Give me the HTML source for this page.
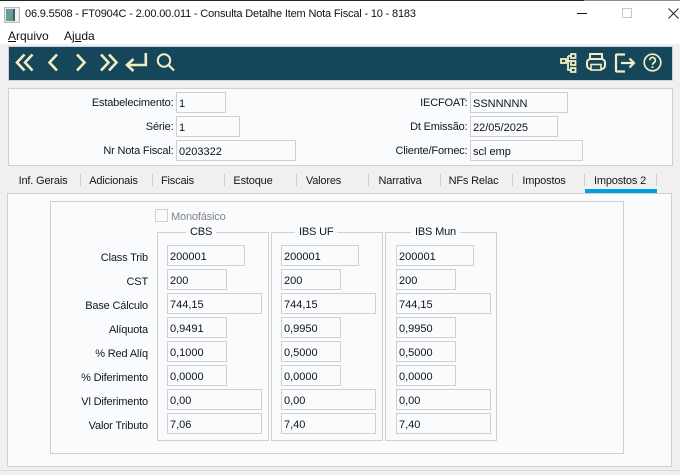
<!DOCTYPE html>
<html><head><meta charset="utf-8">
<style>
html,body{margin:0;padding:0;width:680px;height:475px;overflow:hidden;background:#f0f0f0}
*{box-sizing:border-box}
body{position:relative;font-family:"Liberation Sans",sans-serif;font-size:11px;letter-spacing:-.17px;color:#101820}
.a{position:absolute}
.t{position:absolute;white-space:nowrap;line-height:16px}
.r{position:absolute;white-space:nowrap;line-height:16px;text-align:right;margin-top:1px}
.b{position:absolute;border:1px solid #d0d0d0;background:#fafbfd}
.i{position:absolute;border:1px solid #d0d0d0;background:#fafbfd;height:21px;line-height:22px;padding-left:2px;white-space:nowrap;overflow:hidden;color:#0c1420;letter-spacing:0}
.s{position:absolute;width:1px;height:12px;top:174px;background:#d0d0d0}
.c{position:absolute;white-space:nowrap;line-height:16px;top:173px;text-align:center;width:72px}
.l{position:absolute;background:#fafbfd;padding:0 4px;line-height:16px;top:224px}
</style></head><body>
<div class="a" style="left:0;top:0;width:680px;height:44px;background:#fff"></div>
<div class="a" style="left:0;top:0;width:584px;height:1px;background:#1a2a33"></div>
<div class="a" style="left:584px;top:0;width:96px;height:1px;background:#8a8a8a"></div>
<svg class="a" style="left:4px;top:7px" width="17" height="17"><rect x=".5" y=".5" width="15" height="15" fill="#e8e8e8" stroke="#bbb"/><rect x="2" y="2" width="7" height="12" fill="#6d9aa8"/><rect x="5" y="7" width="4" height="7" fill="#5fa06e"/><rect x="9" y="2" width="2" height="12" fill="#3c5c70"/><rect x="11" y="2" width="3" height="12" fill="#f4f4f4"/></svg>
<div class="t" style="left:25px;top:6px;color:#111">06.9.5508 - FT0904C - 2.00.00.011 - Consulta Detalhe Item Nota Fiscal - 10 - 8183</div>
<div class="a" style="left:577px;top:13px;width:10px;height:1px;background:#111"></div>
<div class="a" style="left:622px;top:8px;width:10px;height:10px;border:1px solid #c8c8c8"></div>
<svg class="a" style="left:667px;top:7px" width="13" height="13"><path d="M1.5 1.5L11.5 11.5M11.5 1.5L1.5 11.5" stroke="#222" stroke-width="1" fill="none"/></svg>
<div class="t" style="left:8px;top:28px;color:#111;font-size:12px;letter-spacing:0"><u>A</u>rquivo</div>
<div class="t" style="left:64px;top:28px;color:#111;font-size:12px;letter-spacing:0">Aj<u>u</u>da</div>
<div class="a" style="left:0;top:44px;width:676px;height:3px;background:#f0f0f0;z-index:1"></div>
<div class="a" style="left:8px;top:46px;width:665px;height:35px;background:#16465a;border:1px solid #ccd2d6;z-index:2"></div>
<svg class="a" style="left:8px;top:46px;z-index:3" width="200" height="35" fill="none" stroke="#f3edc6" stroke-width="2.6">
<path d="M16.5 8.5L9 16.5L16.5 24.5M24.5 8.5L17 16.5L24.5 24.5"/>
<path d="M49 8.5L41.5 16.5L49 24.5"/>
<path d="M69 8.5L76.5 16.5L69 24.5"/>
<path d="M93 8.5L100.5 16.5L93 24.5M101 8.5L108.5 16.5L101 24.5"/>
<path d="M137.8 7V19H120"/><path d="M125.5 13L119 19L125.5 25"/>
<circle cx="156" cy="14.5" r="6.2" stroke-width="2"/><path d="M160.5 19L166 24.5" stroke-width="2.2"/>
</svg>
<svg class="a" style="left:555px;top:46px;z-index:3" width="118" height="35" fill="none" stroke="#f3edc6" stroke-width="1.8">
<rect x="6" y="13" width="5" height="4"/><rect x="16" y="8" width="4.5" height="4"/><rect x="16" y="15" width="4.5" height="4"/><rect x="16" y="22" width="4.5" height="4"/>
<path d="M11 15H16M13 10V24H16M13 10H16"/>
<path d="M35 13V8H47V13" stroke-width="2"/><rect x="32" y="13" width="18" height="10" rx="3.5" stroke-width="2"/><rect x="36" y="18.5" width="10" height="5.5" fill="#16465a" stroke-width="1.6"/>
<path d="M70 8.5H62Q61 8.5 61 9.5V24.5Q61 25.5 62 25.5H70" stroke-width="2.2"/><path d="M66 17H78.5M74.5 12.5L79 17L74.5 21.5" stroke-width="2.2"/>
<circle cx="97.5" cy="16.5" r="8.3" stroke-width="1.7"/>
<path d="M94.7 14.2a2.8 2.8 0 1 1 4.4 2.3c-1 .7-1.6 1.2-1.6 2.4" stroke-width="1.7"/><path d="M97.5 20.2v1.8" stroke-width="1.8"/>
</svg>
<div class="a" style="left:0;top:44px;width:676px;height:426px;background:#fafbfd;z-index:-1"></div>
<div class="b" style="left:8px;top:88px;width:665px;height:78px"></div>
<div class="r" style="left:40px;width:133.5px;top:94px">Estabelecimento:</div>
<div class="i" style="left:176px;top:92px;width:50px">1</div>
<div class="r" style="left:40px;width:133.5px;top:118px">Série:</div>
<div class="i" style="left:176px;top:116px;width:64px">1</div>
<div class="r" style="left:40px;width:133.5px;top:142px">Nr Nota Fiscal:</div>
<div class="i" style="left:176px;top:140px;width:120px">0203322</div>
<div class="r" style="left:340px;width:127.5px;top:94px">IECFOAT:</div>
<div class="i" style="left:470px;top:92px;width:98px">SSNNNNN</div>
<div class="r" style="left:340px;width:127.5px;top:118px">Dt Emissão:</div>
<div class="i" style="left:470px;top:116px;width:88px">22/05/2025</div>
<div class="r" style="left:340px;width:127.5px;top:142px">Cliente/Fornec:</div>
<div class="i" style="left:470px;top:140px;width:113px">scl emp</div>
<div class="a" style="left:0;top:470px;width:680px;height:1px;background:#d8d8d8"></div>
<div class="c" style="left:7px">Inf. Gerais</div><div class="s" style="left:80px"></div>
<div class="c" style="left:77.5px">Adicionais</div><div class="s" style="left:152px"></div>
<div class="c" style="left:141.5px">Fiscais</div><div class="s" style="left:224px"></div>
<div class="c" style="left:217px">Estoque</div><div class="s" style="left:296px"></div>
<div class="c" style="left:287.5px">Valores</div><div class="s" style="left:368px"></div>
<div class="c" style="left:364px">Narrativa</div><div class="s" style="left:440px"></div>
<div class="c" style="left:437.5px">NFs Relac</div><div class="s" style="left:512px"></div>
<div class="c" style="left:508px">Impostos</div><div class="s" style="left:584px"></div>
<div class="c" style="left:584px">Impostos 2</div><div class="s" style="left:656px"></div>
<div class="a" style="left:7px;top:193px;width:665px;height:274px;border:1px solid #d0d0d0;background:#fafbfd"></div>
<div class="a" style="left:585px;top:189px;width:72px;height:4px;background:#00a0e0"></div>
<div class="b" style="left:50px;top:201px;width:574px;height:253px"></div>
<div class="a" style="left:155px;top:209px;width:13px;height:13px;border:1px solid #d0d0d0;background:#fafbfd"></div>
<div class="t" style="left:171px;top:209px;color:#808488">Monofásico</div>
<div class="b" style="left:157px;top:232px;width:112px;height:209px"></div>
<div class="b" style="left:271px;top:232px;width:112px;height:209px"></div>
<div class="b" style="left:385px;top:232px;width:112px;height:209px"></div>
<div class="l" style="left:186px">CBS</div>
<div class="l" style="left:295px">IBS UF</div>
<div class="l" style="left:411px">IBS Mun</div>
<div class="r" style="left:50px;width:98px;top:249px">Class Trib</div>
<div class="r" style="left:50px;width:98px;top:273px">CST</div>
<div class="r" style="left:50px;width:98px;top:297px">Base Cálculo</div>
<div class="r" style="left:50px;width:98px;top:321px">Alíquota</div>
<div class="r" style="left:50px;width:98px;top:345px">% Red Alíq</div>
<div class="r" style="left:50px;width:98px;top:369px">% Diferimento</div>
<div class="r" style="left:50px;width:98px;top:393px">Vl Diferimento</div>
<div class="r" style="left:50px;width:98px;top:417px">Valor Tributo</div>
<div class="i" style="left:167px;top:245px;width:78px">200001</div>
<div class="i" style="left:167px;top:269px;width:60px">200</div>
<div class="i" style="left:167px;top:293px;width:95px">744,15</div>
<div class="i" style="left:167px;top:317px;width:60px">0,9491</div>
<div class="i" style="left:167px;top:341px;width:60px">0,1000</div>
<div class="i" style="left:167px;top:365px;width:60px">0,0000</div>
<div class="i" style="left:167px;top:389px;width:95px">0,00</div>
<div class="i" style="left:167px;top:413px;width:95px">7,06</div>
<div class="i" style="left:281px;top:245px;width:78px">200001</div>
<div class="i" style="left:281px;top:269px;width:60px">200</div>
<div class="i" style="left:281px;top:293px;width:95px">744,15</div>
<div class="i" style="left:281px;top:317px;width:60px">0,9950</div>
<div class="i" style="left:281px;top:341px;width:60px">0,5000</div>
<div class="i" style="left:281px;top:365px;width:60px">0,0000</div>
<div class="i" style="left:281px;top:389px;width:95px">0,00</div>
<div class="i" style="left:281px;top:413px;width:95px">7,40</div>
<div class="i" style="left:396px;top:245px;width:78px">200001</div>
<div class="i" style="left:396px;top:269px;width:60px">200</div>
<div class="i" style="left:396px;top:293px;width:95px">744,15</div>
<div class="i" style="left:396px;top:317px;width:60px">0,9950</div>
<div class="i" style="left:396px;top:341px;width:60px">0,5000</div>
<div class="i" style="left:396px;top:365px;width:60px">0,0000</div>
<div class="i" style="left:396px;top:389px;width:95px">0,00</div>
<div class="i" style="left:396px;top:413px;width:95px">7,40</div>
</body></html>
